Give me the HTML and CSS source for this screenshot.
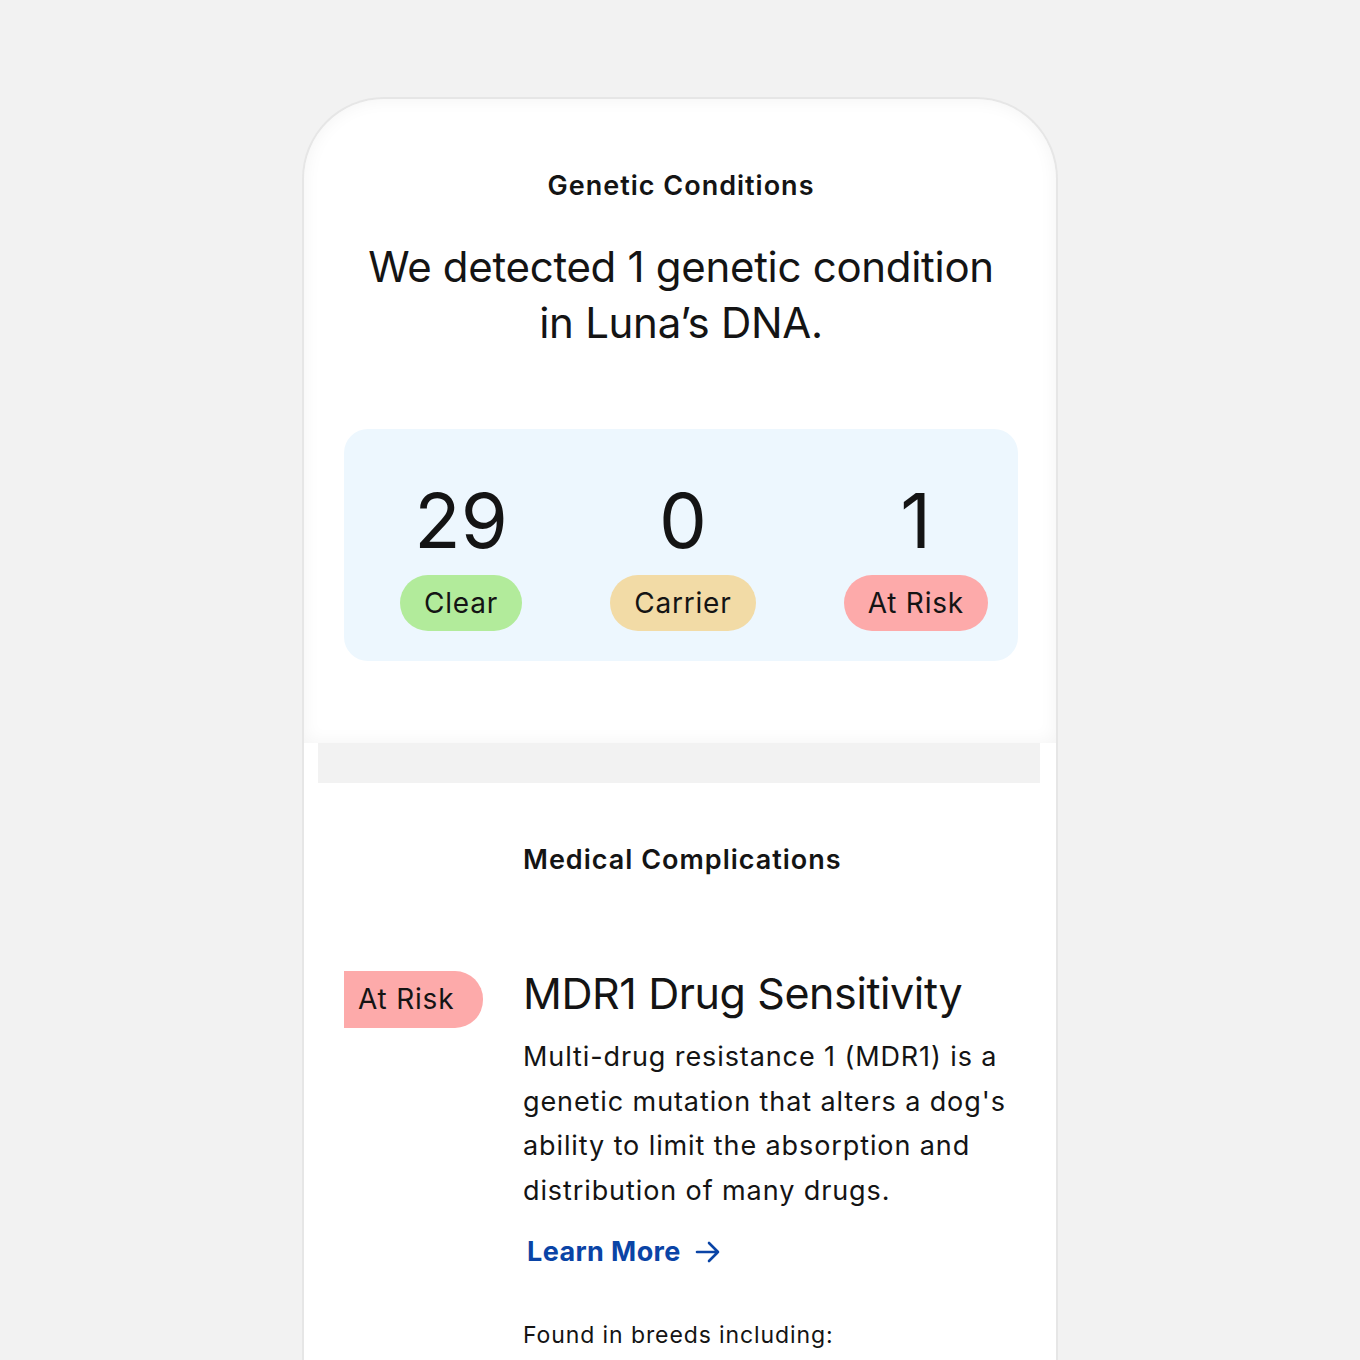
FILE: index.html
```html
<!DOCTYPE html>
<html lang="en">
<head>
<meta charset="utf-8">
<title>Genetic Conditions</title>
<link rel="stylesheet" href="styles.css">
</head>
<body>
<div class="phone">
  <section class="top">
    <h2 class="section-title">Genetic Conditions</h2>
    <p class="headline">We detected 1 genetic condition<br>in Luna’s DNA.</p>
    <div class="stats">
      <div class="stat">
        <div class="num">29</div>
        <span class="badge clear">Clear</span>
      </div>
      <div class="stat">
        <div class="num">0</div>
        <span class="badge carrier">Carrier</span>
      </div>
      <div class="stat">
        <div class="num">1</div>
        <span class="badge risk">At Risk</span>
      </div>
    </div>
  </section>
  <div class="band"></div>
  <section class="bottom">
    <h2 class="section-title med">Medical Complications</h2>
    <div class="condition">
      <div class="cond-badge">At Risk</div>
      <div class="cond-body">
        <h3 class="cond-title">MDR1 Drug Sensitivity</h3>
        <p class="cond-text">Multi-drug resistance 1 (MDR1) is a genetic mutation that alters a dog's ability to limit the absorption and distribution of many drugs.</p>
        <a class="learn" href="#">Learn More
          <svg class="arrow" width="26" height="22" viewBox="0 0 26 22" fill="none" stroke="currentColor" stroke-width="2.6" stroke-linecap="round" stroke-linejoin="round"><path d="M2 11h21M14 2l9 9-9 9"/></svg>
        </a>
        <p class="breeds">Found in breeds including:</p>
      </div>
    </div>
  </section>
</div>
</body>
</html>
```

FILE: styles.css
```css
html, body {
  margin: 0;
  padding: 0;
  background: #f2f2f2;
}
body {
  font-family: Inter, "Liberation Sans", sans-serif;
  color: #141414;
  height: 1360px;
  overflow: hidden;
}
.phone {
  margin: 97px 0 0 302px;
  width: 752px;
  min-height: 1263px;
  border: 2px solid #e6e6e6;
  border-bottom: none;
  border-radius: 82px 82px 0 0;
  background: #fff;
  overflow: hidden;
}
.top {
  padding: 70px 38px 82px 40px;
  box-shadow: inset 0 0 18px rgba(0,0,0,0.05);
  border-radius: 80px 80px 0 0;
}
.section-title {
  margin: 0;
  text-align: center;
  font-size: 27px;
  line-height: 34px;
  font-weight: 600;
  letter-spacing: 1px;
}
.headline {
  margin: 36px 0 0;
  text-align: center;
  font-size: 42px;
  line-height: 56px;
  font-weight: 400;
  letter-spacing: -0.3px;
}
.stats {
  margin-top: 78px;
  background: #edf7fe;
  border-radius: 24px;
  height: 232px;
  display: flex;
  justify-content: space-between;
  padding: 0 30px 0 56px;
  box-sizing: border-box;
}
.stat {
  display: flex;
  flex-direction: column;
  align-items: center;
  padding-top: 46px;
}
.num {
  font-size: 76px;
  line-height: 90px;
  font-weight: 400;
}
.badge {
  display: inline-block;
  margin-top: 10px;
  padding: 0 24px;
  height: 56px;
  line-height: 56px;
  font-size: 28px;
  border-radius: 28px;
  letter-spacing: 0.8px;
}
.clear { background: #b2eb9b; }
.carrier { background: #f2dba6; }
.risk { background: #fdaaaa; }
.band {
  height: 40px;
  margin: 0 16px 0 14px;
  background: #f2f2f2;
}
.bottom {
  padding: 60px 0 0;
}
.section-title.med {
  text-align: left;
  padding-left: 219px;
  letter-spacing: 1px;
}
.condition {
  display: flex;
  gap: 40px;
  margin-top: 94px;
}
.cond-badge {
  flex: 0 0 auto;
  margin-left: 40px;
  width: 139px;
  height: 57px;
  line-height: 57px;
  box-sizing: border-box;
  padding-left: 14px;
  background: #fdaaaa;
  border-radius: 0 28px 28px 0;
  font-size: 28px;
  letter-spacing: 0.8px;
}
.cond-body {
  flex: 1;
  padding-right: 30px;
}
.cond-title {
  margin: -8px 0 0;
  font-size: 43px;
  line-height: 60px;
  font-weight: 400;
  letter-spacing: -0.4px;
}
.cond-text {
  margin: 12px 0 0;
  font-size: 27px;
  line-height: 44.5px;
  letter-spacing: 0.9px;
}
.learn {
  display: inline-flex;
  align-items: center;
  gap: 14px;
  margin: 17px 0 0 4px;
  color: #0a44a6;
  font-size: 27px;
  font-weight: 700;
  text-decoration: none;
  line-height: 44px;
  letter-spacing: 0.4px;
}
.breeds {
  margin: 45px 0 0;
  font-size: 23px;
  line-height: 32px;
  letter-spacing: 0.9px;
}
```
